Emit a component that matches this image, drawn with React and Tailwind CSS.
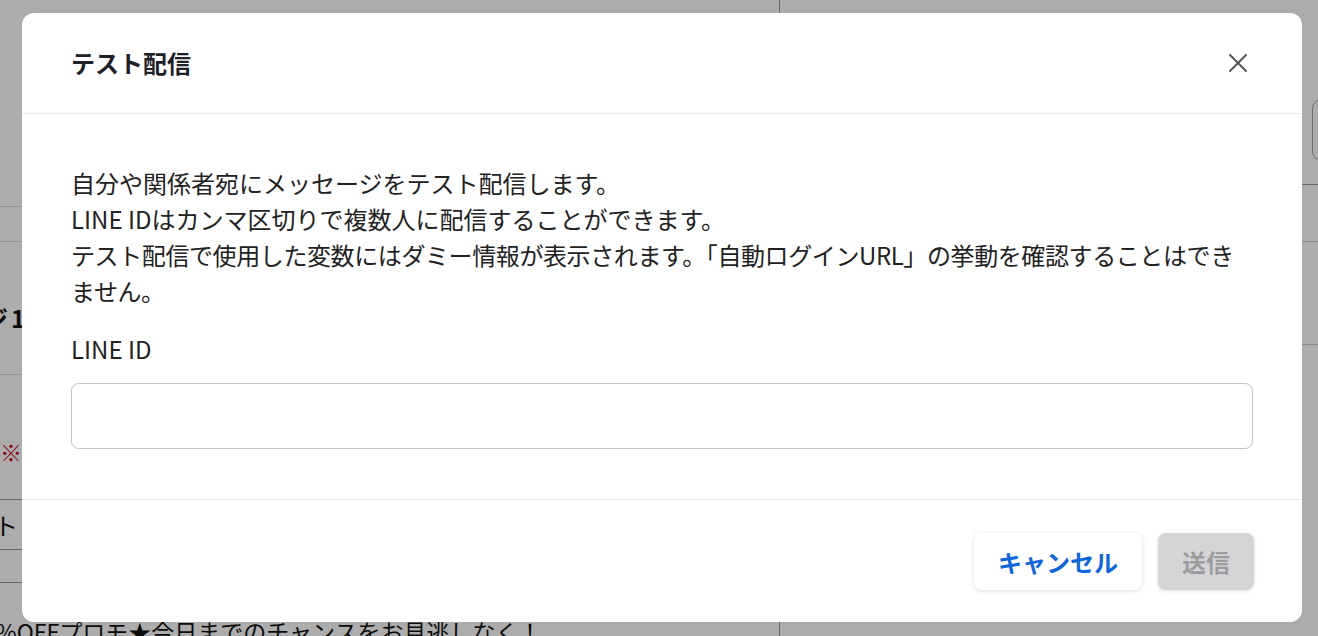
const font = { fontFamily: '"Noto Sans CJK JP", "Noto Sans", sans-serif' };

function CloseIcon() {
  return (
    <svg width="20" height="20" viewBox="0 0 20 20" fill="none" stroke="currentColor" strokeWidth="2" strokeLinecap="round">
      <line x1="2" y1="2" x2="18" y2="18" />
      <line x1="18" y1="2" x2="2" y2="18" />
    </svg>
  );
}

function BackgroundPage() {
  return (
    <div className="flex h-[636px] w-full overflow-hidden bg-white text-[#111]" style={font}>
      <div className="flex w-[780px] shrink-0 flex-col border-r border-[#999]">
        <div className="h-[207px] shrink-0 border-b border-[#ddd]" />
        <div className="h-[35px] shrink-0 border-b border-[#ddd]" />
        <div className="flex h-[133px] shrink-0 items-center border-b border-[#ddd] pt-[20px]">
          <span className="ml-[-16px] text-[24px] font-bold tracking-[3px]">ジ1</span>
        </div>
        <div className="h-[125px] shrink-0 border-b border-[#999] pt-[60px]">
          <span className="text-[22px] text-[#d0021b]">※</span>
        </div>
        <div className="flex h-[50px] shrink-0 items-center border-b border-[#999]">
          <span className="ml-[-6px] text-[24px]">ト</span>
        </div>
        <div className="h-[33px] shrink-0 border-b border-[#999]" />
        <div className="shrink-0 pt-[34px]">
          <p className="ml-[-30px] whitespace-nowrap text-[23px] leading-[28px]">
            20%OFFプロモ★今日までのチャンスをお見逃しなく！
          </p>
        </div>
      </div>
      <div className="flex min-w-0 flex-1 flex-col">
        <div className="h-[100px] shrink-0" />
        <div className="ml-[532px] h-[60px] w-[200px] shrink-0 rounded-lg border border-[#aaa]" />
        <div className="h-[25px] shrink-0 border-b border-[#999]" />
        <div className="h-[57px] shrink-0 border-b border-[#ccc]" />
        <div className="h-[103px] shrink-0 border-b border-[#ccc]" />
      </div>
    </div>
  );
}

function TestSendModal() {
  return (
    <div className="flex w-[1280px] flex-col rounded-xl bg-white text-[#222]" style={font}>
      <div className="flex h-[101px] items-center justify-between border-b border-[#ececee] pl-[49px] pr-[54px]">
        <h2 className="text-[24px] font-bold text-[#1e2128]">テスト配信</h2>
        <button className="flex h-[20px] w-[20px] items-center justify-center text-[#555]">
          <CloseIcon />
        </button>
      </div>

      <div className="border-b border-[#ececee] px-[49px] pb-[50px] pt-[51px]">
        <p className="text-[24px] leading-[36px]">
          自分や関係者宛にメッセージをテスト配信します。
          <br />
          LINE IDはカンマ区切りで複数人に配信することができます。
          <br />
          <span className="tracking-[-0.4px]">
            テスト配信で使用した変数にはダミー情報が表示されます。「自動ログインURL」の挙動を確認することはできません。
          </span>
        </p>
        <label className="mt-[22px] block text-[24px] leading-[36px]">LINE ID</label>
        <input
          type="text"
          className="mt-[16px] block h-[66px] w-full rounded-lg border border-[#c4c4c9] bg-white px-4 text-[22px] outline-none"
        />
      </div>

      <div className="flex justify-end gap-4 pb-[32px] pl-[49px] pr-[48px] pt-[33px]">
        <button className="h-[57px] rounded-lg bg-white px-6 text-[24px] font-bold text-[#0f66d8] shadow-[0_1px_5px_rgba(0,0,0,0.14)]">
          キャンセル
        </button>
        <button
          disabled
          className="h-[57px] rounded-lg bg-[#d5d5d8] px-6 text-[24px] font-bold text-[#9c9c9f] shadow-[0_1px_4px_rgba(0,0,0,0.12)]"
        >
          送信
        </button>
      </div>
    </div>
  );
}

export default function App() {
  return (
    <div className="relative h-[636px] w-full overflow-hidden">
      <BackgroundPage />
      <div className="absolute inset-0 bg-[rgba(0,0,0,0.325)] pl-[22px] pt-[13px]">
        <TestSendModal />
      </div>
    </div>
  );
}
